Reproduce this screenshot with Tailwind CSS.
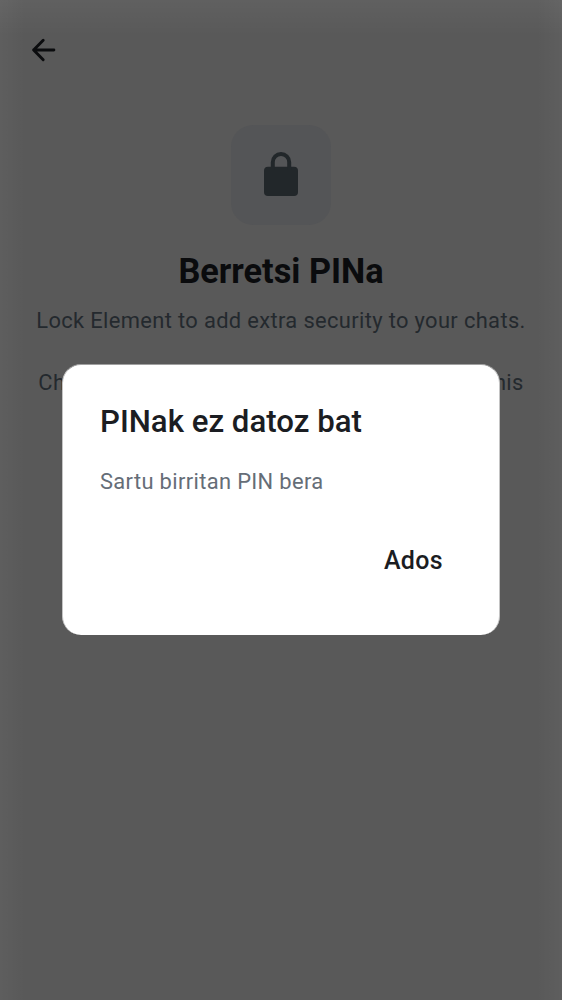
<!DOCTYPE html>
<html lang="eu">
<head>
<meta charset="utf-8">
<title>Berretsi PINa</title>
<script src="https://cdn.jsdelivr.net/npm/@tailwindcss/browser@4"></script>
</head>
<body class="h-[1000px] w-[562px] overflow-hidden bg-[#595959] font-['Roboto',sans-serif]">
<div class="relative h-[1000px] w-[562px] overflow-hidden bg-[linear-gradient(to_bottom,rgba(255,255,255,0.045),transparent_36px),linear-gradient(to_right,rgba(255,255,255,0.03),transparent_25px,transparent_537px,rgba(255,255,255,0.03))]">
  <main class="flex flex-col items-center">
    <header class="flex h-[100px] w-full items-center pl-[31px]">
      <svg class="size-[26px]" viewBox="0 0 26 26" fill="none" stroke="#0b0c0e" stroke-width="2.9" stroke-linecap="round" stroke-linejoin="round"><path d="M12.2 3.3 2.6 13l9.6 9.7M2.6 13h20.3"/></svg>
    </header>
    <div class="mt-[25px] flex size-[100px] items-center justify-center rounded-[22px] bg-[#545557]">
      <svg class="h-[46px] w-[36px]" viewBox="0 0 36 46"><rect x="1" y="14.8" width="34" height="29.2" rx="4" fill="#22272a"/><path d="M9.8 18V10.2a8.2 8.2 0 0 1 16.4 0V18" fill="none" stroke="#22272a" stroke-width="4"/></svg>
    </div>
    <h1 class="mt-[24px] text-[34.3px] leading-[44px] font-bold whitespace-nowrap text-[#0a0b0d]">Berretsi PINa</h1>
    <p class="mt-[12px] w-[500px] text-center text-[21.9px] leading-[31.2px] tracking-[0.35px] text-[#24292e]">Lock Element to add extra security to your chats.<br><br><span class="whitespace-nowrap">Choose something memorable. If you forget this</span></p>
  </main>
  <section role="dialog" class="absolute top-[364px] left-[62px] flex h-[271px] w-[438px] flex-col rounded-[19px] border-x border-t border-x-[#c4c4c4] border-t-[#a0a0a0] bg-white px-[37px] pt-[37px]">
    <h2 class="text-[31.2px] leading-[40px] font-medium whitespace-nowrap text-[#1b1d22]">PINak ez datoz bat</h2>
    <p class="mt-[24px] text-[21.9px] leading-[31px] tracking-[0.35px] whitespace-nowrap text-[#656d77]">Sartu birritan PIN bera</p>
    <button class="mt-[47px] mr-[19px] self-end text-[25px] leading-[33px] font-medium tracking-[0.35px] text-[#1b1d22]">Ados</button>
  </section>
</div>
</body>
</html>
